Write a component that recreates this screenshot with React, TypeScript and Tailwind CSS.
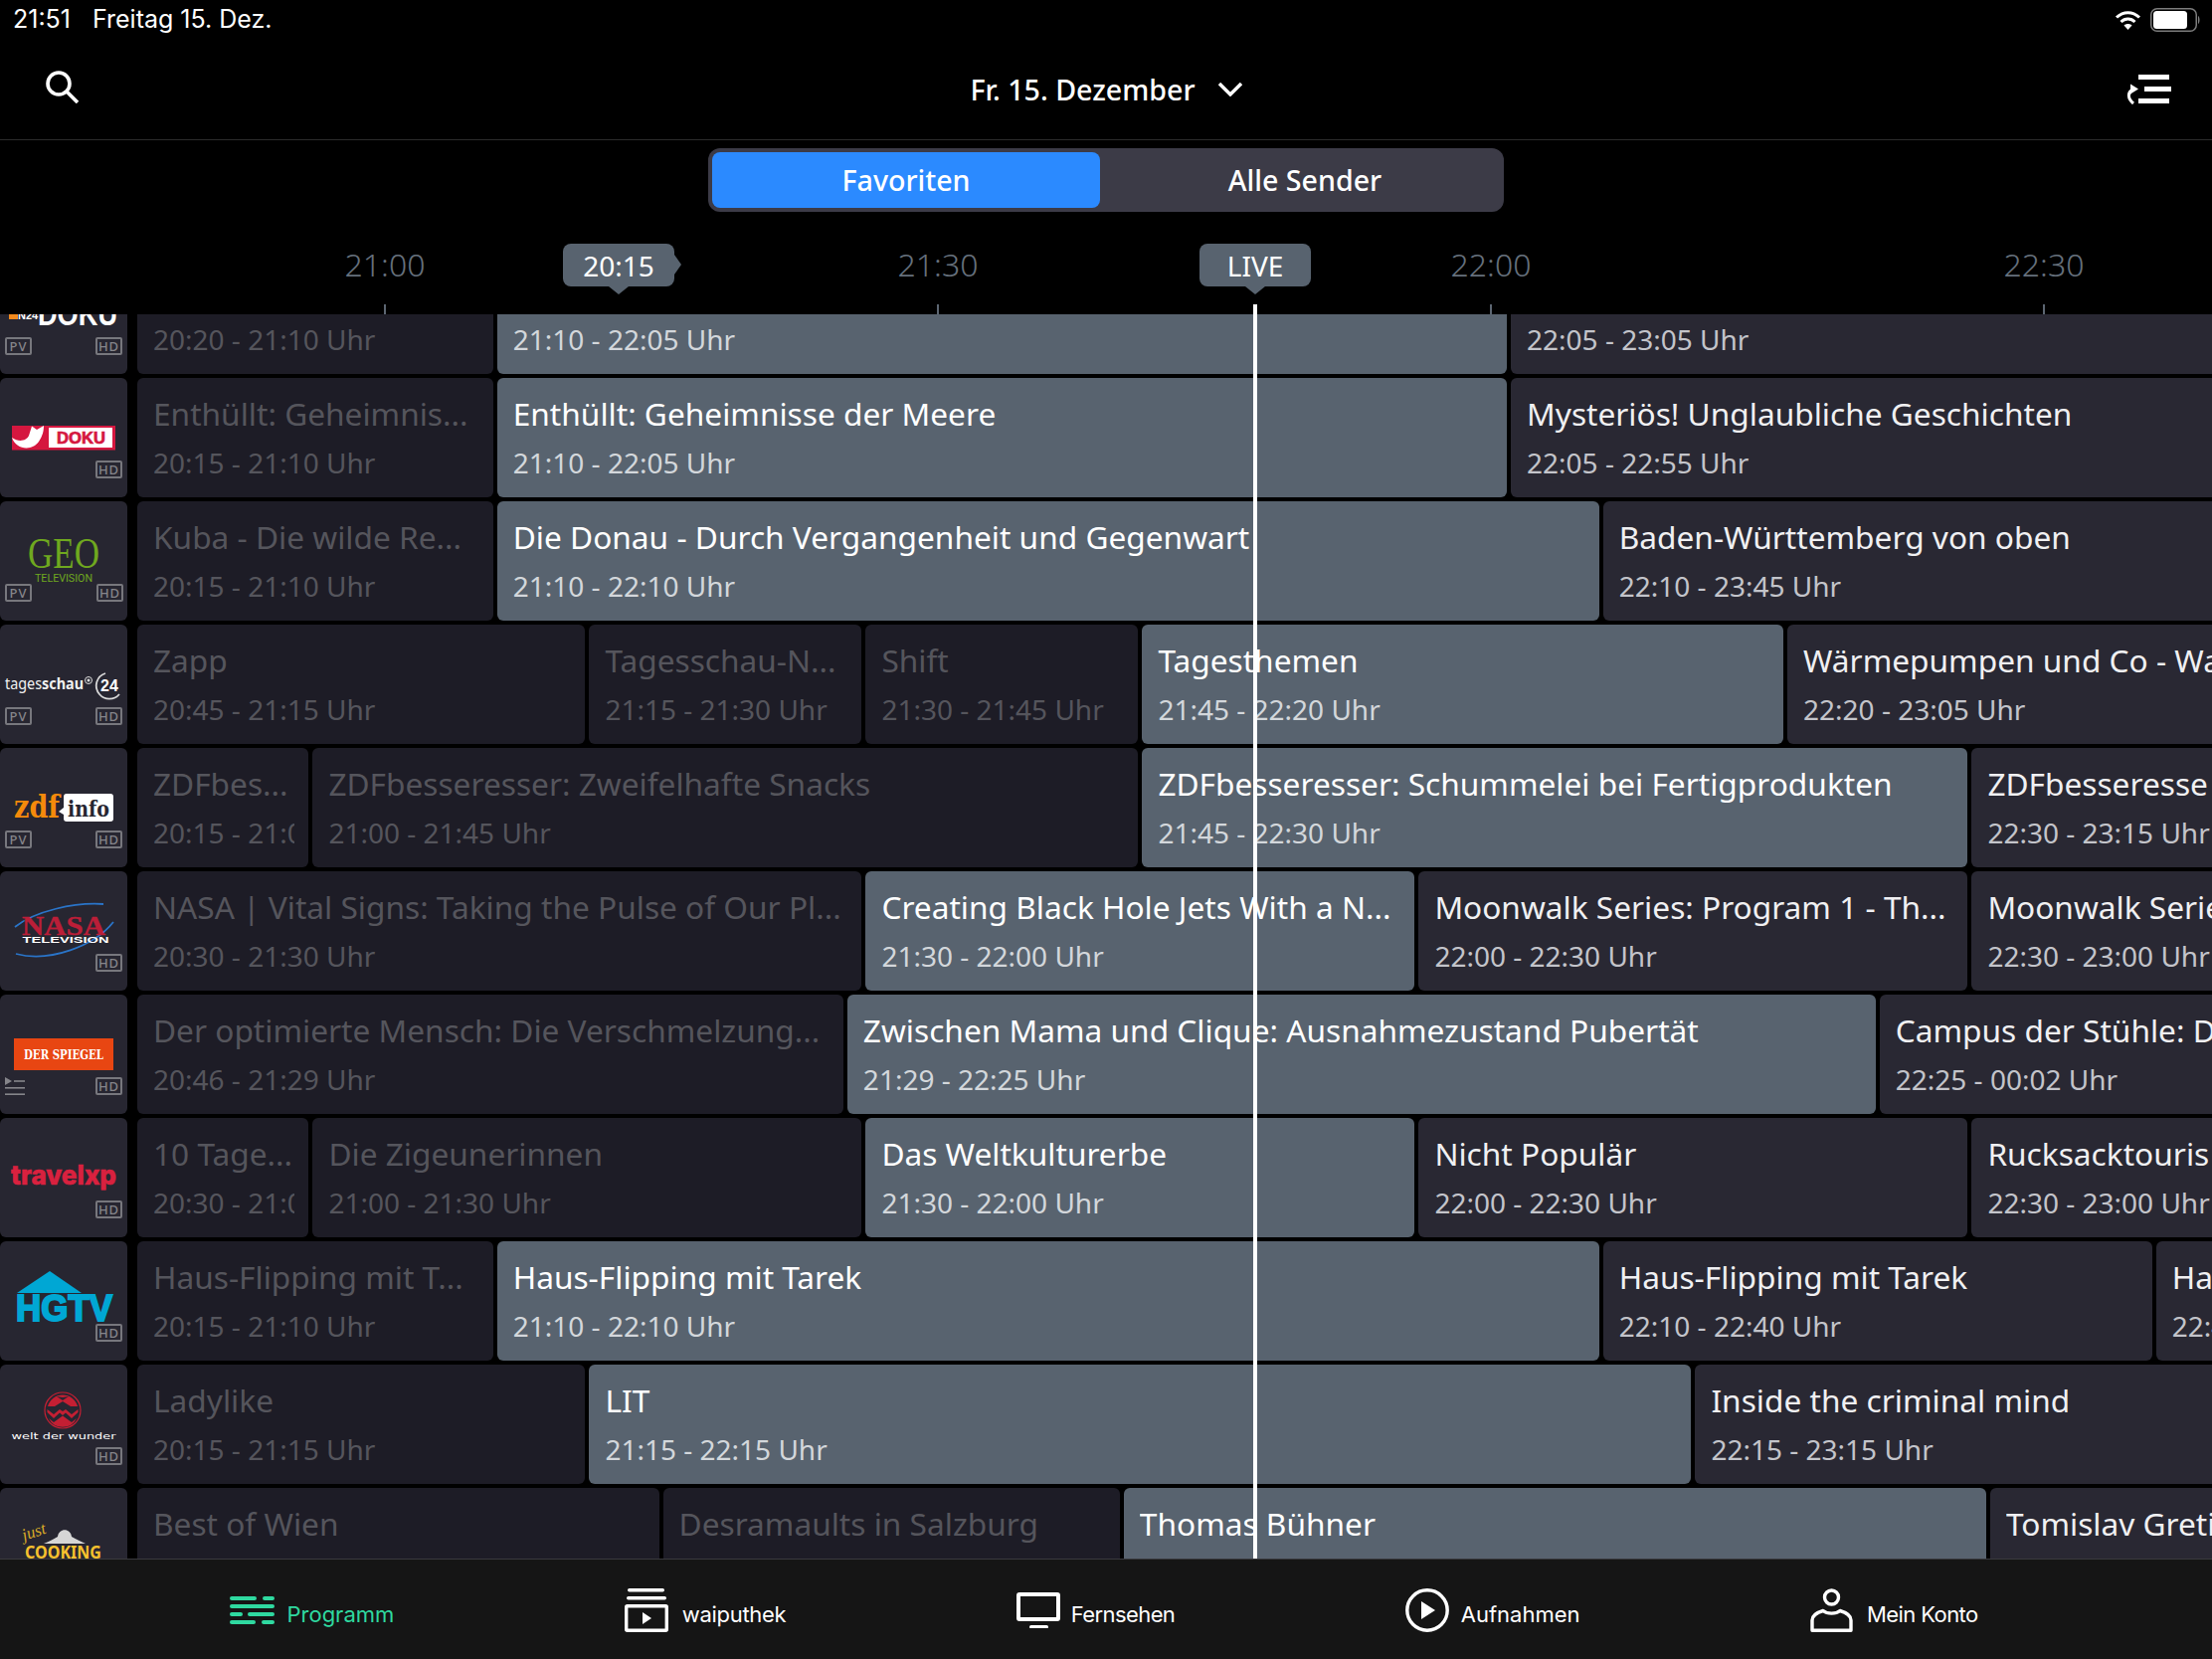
const NOW = 21 * 60 + 51;
const toMin = (t: string) => {
  const [h, m] = t.split(":").map(Number);
  return h * 60 + m;
};
// grid scale: 21:30 sits at x=870, 30 minutes are 556px
const xOf = (min: number) => 870.4 + (min - 1290) * (556 / 30);

type Show = { title: string; start: string; end: string; hideTime?: boolean };

const show = (title: string, start: string, end: string, hideTime = false): Show => ({ title, start, end, hideTime });

const rows: { logo: () => React.ReactNode; pv?: boolean; list?: boolean; hdRight?: boolean; shows: Show[] }[] = [
  {
    logo: () => <N24Logo />,
    pv: true,
    shows: [show("", "20:20", "21:10"), show("", "21:10", "22:05"), show("", "22:05", "23:05")],
  },
  {
    logo: () => <KabelLogo />,
    shows: [
      show("Enthüllt: Geheimnis...", "20:15", "21:10"),
      show("Enthüllt: Geheimnisse der Meere", "21:10", "22:05"),
      show("Mysteriös! Unglaubliche Geschichten", "22:05", "22:55"),
    ],
  },
  {
    logo: () => <GeoLogo />,
    pv: true,
    hdRight: true,
    shows: [
      show("Kuba - Die wilde Re...", "20:15", "21:10"),
      show("Die Donau - Durch Vergangenheit und Gegenwart", "21:10", "22:10"),
      show("Baden-Württemberg von oben", "22:10", "23:45"),
    ],
  },
  {
    logo: () => <TagesschauLogo />,
    pv: true,
    shows: [
      show("Zapp", "20:45", "21:15"),
      show("Tagesschau-N...", "21:15", "21:30"),
      show("Shift", "21:30", "21:45"),
      show("Tagesthemen", "21:45", "22:20"),
      show("Wärmepumpen und Co - Wa", "22:20", "23:05"),
    ],
  },
  {
    logo: () => <ZdfLogo />,
    pv: true,
    shows: [
      show("ZDFbes...", "20:15", "21:00"),
      show("ZDFbesseresser: Zweifelhafte Snacks", "21:00", "21:45"),
      show("ZDFbesseresser: Schummelei bei Fertigprodukten", "21:45", "22:30"),
      show("ZDFbesseresse", "22:30", "23:15"),
    ],
  },
  {
    logo: () => <NasaLogo />,
    shows: [
      show("NASA | Vital Signs: Taking the Pulse of Our Pl...", "20:30", "21:30"),
      show("Creating Black Hole Jets With a N...", "21:30", "22:00"),
      show("Moonwalk Series: Program 1 - Th...", "22:00", "22:30"),
      show("Moonwalk Serie", "22:30", "23:00"),
    ],
  },
  {
    logo: () => <SpiegelLogo />,
    list: true,
    shows: [
      show("Der optimierte Mensch: Die Verschmelzung...", "20:46", "21:29"),
      show("Zwischen Mama und Clique: Ausnahmezustand Pubertät", "21:29", "22:25"),
      show("Campus der Stühle: D", "22:25", "24:02"),
    ],
  },
  {
    logo: () => <TravelLogo />,
    shows: [
      show("10 Tage...", "20:30", "21:00"),
      show("Die Zigeunerinnen", "21:00", "21:30"),
      show("Das Weltkulturerbe", "21:30", "22:00"),
      show("Nicht Populär", "22:00", "22:30"),
      show("Rucksacktouris", "22:30", "23:00"),
    ],
  },
  {
    logo: () => <HgtvLogo />,
    shows: [
      show("Haus-Flipping mit T...", "20:15", "21:10"),
      show("Haus-Flipping mit Tarek", "21:10", "22:10"),
      show("Haus-Flipping mit Tarek", "22:10", "22:40"),
      show("Ha", "22:40", "23:10"),
    ],
  },
  {
    logo: () => <WunderLogo />,
    shows: [
      show("Ladylike", "20:15", "21:15"),
      show("LIT", "21:15", "22:15"),
      show("Inside the criminal mind", "22:15", "23:15"),
    ],
  },
  {
    logo: () => <CookingLogo />,
    shows: [
      show("Best of Wien", "20:30", "21:19", true),
      show("Desramaults in Salzburg", "21:19", "21:44", true),
      show("Thomas Bühner", "21:44", "22:31", true),
      show("Tomislav Greti", "22:31", "23:30", true),
    ],
  },
];

const LogoSvg = ({ children }: { children: React.ReactNode }) => (
  <svg viewBox="0 0 128 120" className="absolute inset-0 h-[120px] w-[128px]">
    {children}
  </svg>
);

const N24Logo = () => (
  <LogoSvg>
    <rect x="9" y="52" width="9" height="13" fill="#f28a1e" />
    <text x="18" y="65" fontSize="11" fontWeight="700" fill="#fff" fontFamily="Liberation Sans">N24</text>
    <text x="38" y="71" fontSize="34" fontWeight="700" fill="#fff" fontFamily="Liberation Sans" textLength="80" lengthAdjust="spacingAndGlyphs">DOKU</text>
  </LogoSvg>
);

const KabelLogo = () => (
  <LogoSvg>
    <rect x="12" y="48" width="104" height="24.5" fill="#d5173f" />
    <rect x="49" y="50" width="64" height="20" fill="#fff" />
    <text x="57" y="66" fontSize="17" fontWeight="700" fill="#d5173f" stroke="#d5173f" strokeWidth="0.7" fontFamily="Liberation Sans" textLength="49" lengthAdjust="spacingAndGlyphs">DOKU</text>
    <path d="M12 60 C16 72 32 74 39 64 C43 58 44 53 44 48 L37 52 L32 48.5 L29 58 C27 63 19 65 12 60 Z" fill="#fff" />
  </LogoSvg>
);

const GeoLogo = () => (
  <LogoSvg>
    <text x="64" y="67" textAnchor="middle" fontSize="44" fill="#6fa81f" fontFamily="Liberation Serif" textLength="72" lengthAdjust="spacingAndGlyphs">GEO</text>
    <text x="64" y="81" textAnchor="middle" fontSize="10" fill="#6fa81f" fontFamily="Roboto" textLength="58" lengthAdjust="spacingAndGlyphs">TELEVISION</text>
  </LogoSvg>
);

const TagesschauLogo = () => (
  <LogoSvg>
    <text x="5" y="65" fontSize="15.5" fill="#f0f0f0" fontFamily="Noto Sans" textLength="79" lengthAdjust="spacingAndGlyphs">
      tages<tspan fontWeight="700">schau</tspan>
    </text>
    <circle cx="89" cy="56" r="3.5" fill="none" stroke="#ddd" strokeWidth="1" />
    <circle cx="89" cy="56" r="1.5" fill="#ddd" />
    <path d="M106 49 A13 13 0 0 0 100 70 A13 13 0 0 0 120 70" fill="none" stroke="#d8d8d8" strokeWidth="1.8" />
    <text x="101" y="67" fontSize="16" fontWeight="700" fill="#fff" fontFamily="Liberation Sans">24</text>
  </LogoSvg>
);

const ZdfLogo = () => (
  <LogoSvg>
    <text x="14" y="70" fontSize="31" fontWeight="700" fill="#f58a0b" fontFamily="DejaVu Serif" textLength="46" lengthAdjust="spacingAndGlyphs">zdf</text>
    <rect x="64" y="46" width="50" height="28" rx="3" fill="#fff" />
    <path d="M64 60 L59 64 L64 67 Z" fill="#fff" />
    <text x="68" y="69" fontSize="22" fontWeight="700" fill="#272631" fontFamily="DejaVu Serif" textLength="42" lengthAdjust="spacingAndGlyphs">info</text>
  </LogoSvg>
);

const NasaLogo = () => (
  <LogoSvg>
    <path d="M15 56 C35 40 75 31 104 33" fill="none" stroke="#2a74c8" strokeWidth="1.8" />
    <path d="M16 83 C50 92 95 75 114 51" fill="none" stroke="#2a74c8" strokeWidth="1.8" />
    <text x="64" y="64" textAnchor="middle" fontSize="27" fontWeight="700" fill="#bb1e38" stroke="#bb1e38" strokeWidth="0.4" fontFamily="Liberation Serif" textLength="84" lengthAdjust="spacingAndGlyphs">NASA</text>
    <text x="66" y="72" textAnchor="middle" fontSize="9.5" fontWeight="700" fill="#fff" fontFamily="Liberation Sans" textLength="87" lengthAdjust="spacingAndGlyphs">TELEVISION</text>
  </LogoSvg>
);

const SpiegelLogo = () => (
  <LogoSvg>
    <rect x="14" y="44" width="100" height="32" fill="#e84612" />
    <text x="64" y="65" textAnchor="middle" fontSize="13" fontWeight="700" fill="#fff" fontFamily="DejaVu Serif" textLength="80" lengthAdjust="spacingAndGlyphs">DER SPIEGEL</text>
  </LogoSvg>
);

const TravelLogo = () => (
  <LogoSvg>
    <text x="11" y="67" fontSize="27" fontWeight="800" fill="#d9213f" stroke="#d9213f" strokeWidth="0.6" fontFamily="Inter" textLength="106" lengthAdjust="spacingAndGlyphs">travelxp</text>
  </LogoSvg>
);

const HgtvLogo = () => (
  <LogoSvg>
    <path d="M17 52 L50 30 L82 52 Z" fill="#00a7d4" />
    <text x="16" y="80" fontSize="37" fontWeight="700" fill="#00a7d4" stroke="#00a7d4" strokeWidth="2" fontFamily="Liberation Sans" textLength="97" lengthAdjust="spacingAndGlyphs">HGTV</text>
  </LogoSvg>
);

const WunderLogo = () => (
  <LogoSvg>
    <circle cx="63" cy="46" r="18" fill="none" stroke="#c41f33" strokeWidth="1.2" />
    <path d="M48 42 A15.5 15.5 0 0 1 78 42 L71 42 L63 37 L55 42 Z M54 36 L49 40 M57 32 L63 36 L69 32 L63 33 Z" fill="#c41f33" />
    <path d="M47.5 45 L54 50 L60 45 L63 47 L66 45 L72 50 L78.5 45 L78.5 48 L72 54 L66 48.5 L63 51 L60 48.5 L54 54 L47.5 48 Z" fill="#c41f33" />
    <path d="M49 54 L54 58 L63 51.5 L72 58 L77 54 A15.5 15.5 0 0 1 49 54 Z" fill="#c41f33" />
    <text x="64" y="75" textAnchor="middle" fontSize="9" fill="#fff" fontFamily="DejaVu Sans" textLength="105" lengthAdjust="spacingAndGlyphs">welt der wunder</text>
  </LogoSvg>
);

const CookingLogo = () => (
  <LogoSvg>
    <text x="24" y="53" fontSize="17" fontStyle="italic" fill="#d9ab28" fontFamily="Liberation Serif" transform="rotate(-18 24 53)">just</text>
    <path d="M44 56 C50 54 54 51 58 49 C59 40 71 40 72 49 C76 51 81 54 86 56 Z" fill="#d6d6d6" />
    <text x="25" y="71" fontSize="17" fontWeight="700" fill="#f7c12e" fontFamily="Noto Sans" textLength="77" lengthAdjust="spacingAndGlyphs">COOKING</text>
  </LogoSvg>
);

const Badge = ({ label }: { label: string }) => (
  <span className="flex h-[18px] w-[27px] items-center justify-center rounded-[2px] border-2 border-[#77777d] text-[13px] leading-none font-medium tracking-[1px] text-[#85858a]">
    {label}
  </span>
);

const ListIcon = () => (
  <svg viewBox="0 0 20 18" className="h-[18px] w-[20px]">
    <path d="M0 0 L7 4 L0 8 Z" fill="#85858a" />
    <rect x="9" y="3.2" width="11" height="1.6" fill="#85858a" />
    <rect x="0" y="10" width="20" height="1.6" fill="#85858a" />
    <rect x="0" y="16.4" width="20" height="1.6" fill="#85858a" />
  </svg>
);

const Channel = ({ logo, pv, list, hdRight }: { logo: () => React.ReactNode; pv?: boolean; list?: boolean; hdRight?: boolean }) => (
  <div className="relative h-[120px] w-[128px] shrink-0 overflow-hidden rounded-md bg-[#272631]">
    {logo()}
    <div className="absolute bottom-[19px] left-[5px]">
      {pv && <Badge label="PV" />}
      {list && <ListIcon />}
    </div>
    <div className={hdRight ? "absolute right-[4px] bottom-[19px]" : "absolute right-[5px] bottom-[19px]"}>
      <Badge label="HD" />
    </div>
  </div>
);

const Cell = ({ item, first }: { item: Show; first: boolean }) => {
  const start = toMin(item.start);
  const end = toMin(item.end);
  const left = first ? 138 : xOf(start);
  const width = xOf(end) - left - 4;
  const past = end <= NOW;
  const live = start <= NOW && end > NOW;
  const fmt = (t: string) => (t === "24:02" ? "00:02" : t);

  return (
    <div
      style={{ width }}
      className={
        past
          ? "h-[120px] shrink-0 overflow-hidden rounded-md bg-[#1d1c26] pt-[14px] pr-[14px] pl-[16px] text-[#55555c]"
          : live
            ? "h-[120px] shrink-0 overflow-hidden rounded-md bg-[#58636f] pt-[14px] pr-[14px] pl-[16px] text-white"
            : "h-[120px] shrink-0 overflow-hidden rounded-md bg-[#292833] pt-[14px] pr-[14px] pl-[16px] text-[#f0f0f2]"
      }
    >
      <div className="overflow-hidden">
        <div className="h-[44px] text-[31.65px] leading-[44px] whitespace-nowrap">{item.title}</div>
        {!item.hideTime && (
          <div
            className={
              past
                ? "mt-[5px] h-[44px] text-[28px] leading-[44px] whitespace-nowrap"
                : live
                  ? "mt-[5px] h-[44px] text-[28px] leading-[44px] whitespace-nowrap text-[#d3d7db]"
                  : "mt-[5px] h-[44px] text-[28px] leading-[44px] whitespace-nowrap text-[#c3c4ca]"
            }
          >
            {fmt(item.start)} - {fmt(item.end)} Uhr
          </div>
        )}
      </div>
    </div>
  );
};

const Pill = ({ label, className, side }: { label: string; className: string; side?: boolean }) => (
  <div className={className}>
    <div className="flex h-[43px] w-[112px] items-center justify-center rounded-lg bg-[#58636f] text-[28px] text-white">{label}</div>
    <div className="absolute top-[43px] left-[46px] h-0 w-0 border-x-[10px] border-t-[8px] border-x-transparent border-t-[#58636f]" />
    {side && <div className="absolute top-[11px] left-[112px] h-0 w-0 border-y-[10px] border-l-[7px] border-y-transparent border-l-[#58636f]" />}
  </div>
);

const nav = [
  { label: "Programm", cls: "mt-[8px] text-[22px] text-[#2fd9a0]", gap: "flex items-center gap-[12px]", icon: <ProgrammIcon /> },
  { label: "waiputhek", cls: "mt-[8px] text-[22px] tracking-[-0.3px] text-white", gap: "flex items-center gap-[14px]", icon: <WaipuIcon /> },
  { label: "Fernsehen", cls: "mt-[8px] text-[22px] tracking-[-0.6px] text-white", gap: "flex items-center gap-[11px]", icon: <TvIcon /> },
  { label: "Aufnahmen", cls: "mt-[8px] text-[22px] text-white", gap: "flex items-center gap-[12px]", icon: <PlayIcon /> },
  { label: "Mein Konto", cls: "mt-[8px] text-[22px] tracking-[-0.6px] text-white", gap: "flex items-center gap-[13px]", icon: <UserIcon /> },
];

function ProgrammIcon() {
  return (
    <svg viewBox="0 0 45 28" className="h-[28px] w-[45px]" fill="#2fd9a0">
      <rect x="0" y="0" width="27" height="4" rx="2" />
      <rect x="33" y="0" width="12" height="4" rx="2" />
      <rect x="0" y="8" width="45" height="4" rx="2" />
      <rect x="0" y="16" width="13" height="4" rx="2" />
      <rect x="18" y="16" width="27" height="4" rx="2" />
      <rect x="0" y="24" width="26" height="4" rx="2" />
      <rect x="32" y="24" width="13" height="4" rx="2" />
    </svg>
  );
}

function WaipuIcon() {
  return (
    <svg viewBox="0 0 44 44" className="h-[44px] w-[44px]" fill="#fff">
      <rect x="3" y="0" width="37" height="3.5" rx="1.7" />
      <rect x="2" y="8" width="40" height="3.5" rx="1.7" />
      <rect x="1.7" y="17.7" width="40.6" height="24.6" rx="1" fill="none" stroke="#fff" strokeWidth="3.4" />
      <path d="M18 24 L27 30 L18 36 Z" />
    </svg>
  );
}

function TvIcon() {
  return (
    <svg viewBox="0 0 44 36" className="h-[36px] w-[44px]" fill="#fff">
      <rect x="2" y="2" width="40" height="25" rx="1" fill="none" stroke="#fff" strokeWidth="4" />
      <rect x="13" y="33" width="19" height="3.4" rx="1.7" />
    </svg>
  );
}

function PlayIcon() {
  return (
    <svg viewBox="0 0 44 44" className="h-[44px] w-[44px]" fill="#fff">
      <circle cx="22" cy="22" r="20.2" fill="none" stroke="#fff" strokeWidth="3.4" />
      <path d="M16 13 L30 22 L16 31 Z" />
    </svg>
  );
}

function UserIcon() {
  return (
    <svg viewBox="0 0 44 44" className="h-[44px] w-[44px]" fill="none" stroke="#fff" strokeWidth="3.4">
      <circle cx="21.5" cy="9" r="7" />
      <path d="M2 42.3 V32 C2 27 8 24 13 22.5 C17 26 26 26 30 22.5 C35 24 41 27 41 32 V42.3 Z" strokeLinejoin="round" />
    </svg>
  );
}

export default function App() {
  return (
    <div className="relative flex h-[1668px] w-[2224px] flex-col overflow-hidden bg-black font-['Noto_Sans',sans-serif] text-white">
      {/* status bar */}
      <div className="flex h-[40px] items-center justify-between pr-[10px] pl-[13px] font-['Inter',sans-serif] text-[25px]">
        <div className="flex gap-[22px]">
          <span>21:51</span>
          <span>Freitag 15. Dez.</span>
        </div>
        <div className="flex items-center gap-[9px]">
          <svg viewBox="0 0 27 20" className="h-[20px] w-[27px]" fill="none" stroke="#fff" strokeWidth="3">
            <path d="M2 7.5 C9 1 18 1 25 7.5" />
            <path d="M6.5 12 C10.5 8 16.5 8 20.5 12" />
            <path d="M13.5 20 L9.5 15.5 C11.5 13.5 15.5 13.5 17.5 15.5 Z" fill="#fff" stroke="none" />
          </svg>
          <svg viewBox="0 0 52 24" className="h-[24px] w-[52px]">
            <rect x="0.75" y="0.75" width="45.5" height="22.5" rx="6" fill="none" stroke="#7c7c7c" strokeWidth="1.5" />
            <rect x="3" y="3" width="34" height="18" rx="3.5" fill="#fff" />
            <path d="M48 8 C50 9 50 15 48 16 Z" fill="#7c7c7c" />
          </svg>
        </div>
      </div>

      {/* header */}
      <div className="flex h-[101px] shrink-0 items-center justify-between border-b border-[#2b2b2b] pr-[41px] pl-[46px]">
        <svg viewBox="0 0 34 33" className="mb-[5px] h-[33px] w-[34px]" fill="none" stroke="#fff" strokeWidth="3.6">
          <circle cx="13" cy="13" r="11" />
          <path d="M21 21 L32 32" />
        </svg>
        <div className="ml-[6px] flex items-center gap-[23px]">
          <span className="text-[28.6px] font-medium">Fr. 15. Dezember</span>
          <svg viewBox="0 0 24 14" className="h-[14px] w-[24px]" fill="none" stroke="#fff" strokeWidth="3.4">
            <path d="M1 1 L12 12 L23 1" />
          </svg>
        </div>
        <svg viewBox="0 0 45 30" className="h-[30px] w-[45px]" fill="#fff">
          <rect x="12" y="0" width="31" height="5" />
          <rect x="18" y="12" width="27" height="5" />
          <rect x="12" y="24" width="31" height="5" />
          <path d="M7 29 C1 24 1 18 6 15" fill="none" stroke="#fff" strokeWidth="3" />
          <path d="M4 9.5 L12 14.5 L4 19.5 Z" />
        </svg>
      </div>

      {/* favourites switch */}
      <div className="mt-[8px] flex justify-center">
        <div className="flex h-[64px] w-[800px] rounded-xl bg-[#3c3b47] p-[4px]">
          <div className="flex w-[390px] items-center justify-center rounded-lg bg-[#2b8aff] text-[28.6px] font-medium">Favoriten</div>
          <div className="flex flex-1 items-center justify-center pl-[10px] text-[28.6px] font-medium">Alle Sender</div>
        </div>
      </div>

      {/* timeline */}
      <div className="relative flex h-[103px] shrink-0 pl-[109px]">
        {["21:00", "21:30", "22:00", "22:30"].map((t) => (
          <div key={t} className="flex w-[556px] shrink-0 flex-col items-center">
            <span className="mt-[33px] text-[32px] leading-[40px] font-light text-[#66707c]">{t}</span>
            <span className="mt-auto h-[10px] w-[2px] bg-[#5c6672]" />
          </div>
        ))}
        <Pill label="20:15" side className="absolute top-[32px] left-[566px]" />
        <Pill label="LIVE" className="absolute top-[32px] left-[1206px]" />
      </div>

      {/* programme grid */}
      <div className="min-h-0 flex-1 overflow-hidden">
        <div className="-mt-[60px] flex flex-col gap-[4px]">
          {rows.map((row, i) => (
            <div key={i} className="flex gap-[10px]">
              <Channel logo={row.logo} pv={row.pv} list={row.list} hdRight={row.hdRight} />
              <div className="flex gap-[4px]">
                {row.shows.map((s, j) => (
                  <Cell key={j} item={s} first={j === 0} />
                ))}
              </div>
            </div>
          ))}
        </div>
      </div>

      {/* live line */}
      <div className="absolute top-[306px] left-[1260px] h-[1261px] w-[4px] bg-white" />

      {/* bottom nav */}
      <div className="flex h-[101px] shrink-0 justify-evenly border-t border-[#3a3a3e] bg-[#151515] pt-[2px] pr-[4px] font-['Inter',sans-serif]">
        {nav.map((n) => (
          <div key={n.label} className={n.gap}>
            {n.icon}
            <span className={n.cls}>{n.label}</span>
          </div>
        ))}
      </div>
    </div>
  );
}
